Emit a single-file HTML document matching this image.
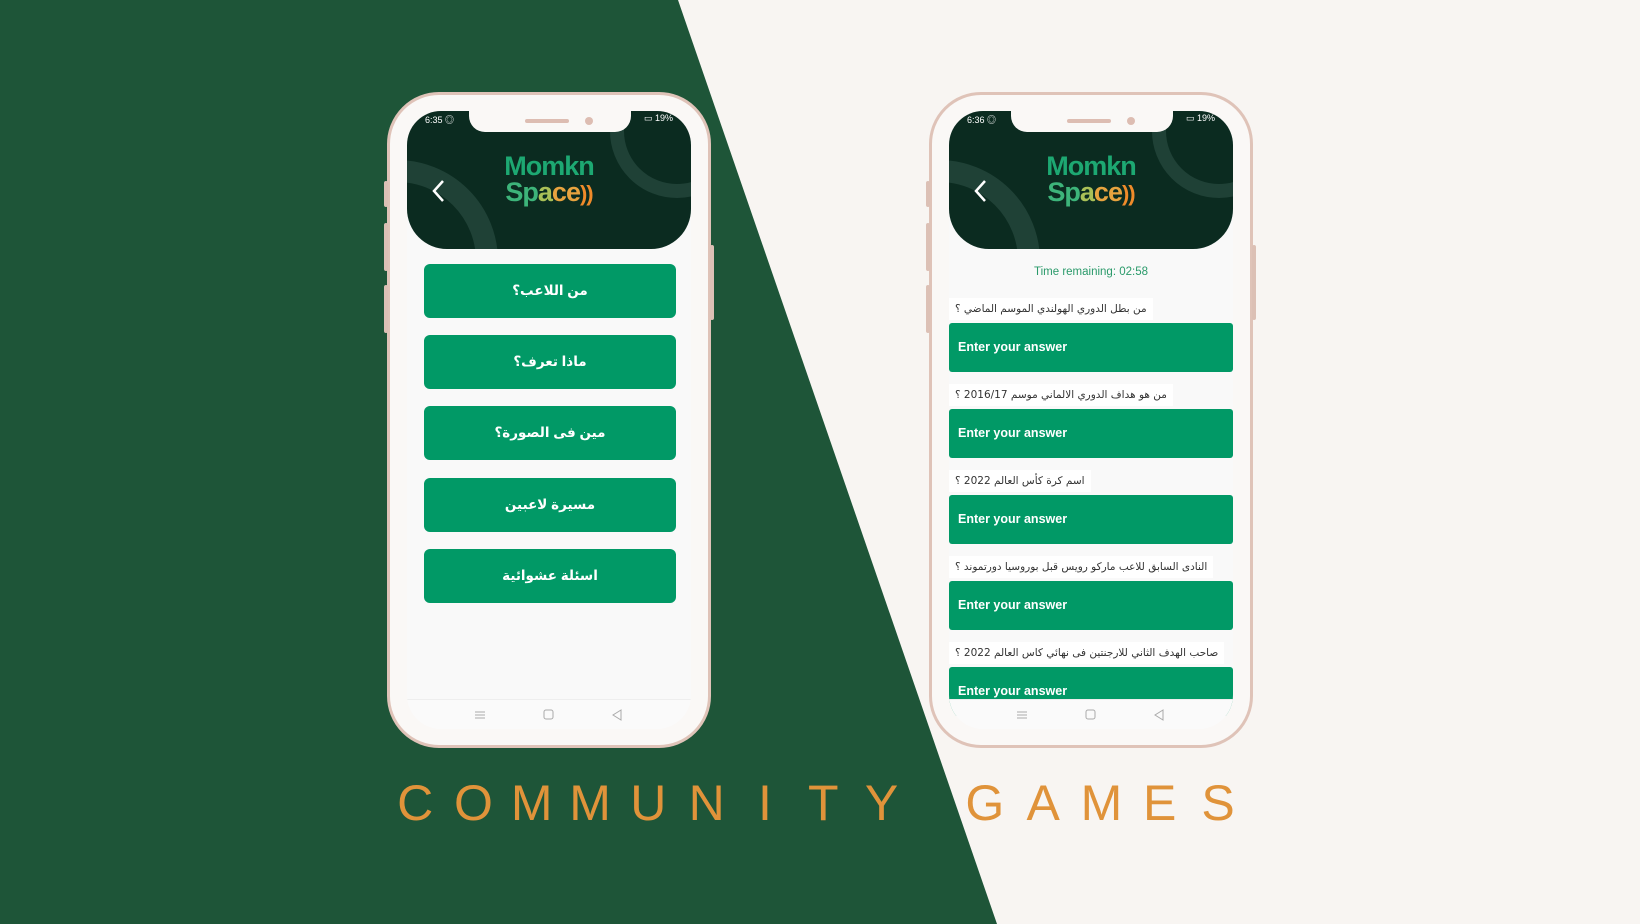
<!DOCTYPE html>
<html><head><meta charset="utf-8"><style>
*{margin:0;padding:0;box-sizing:border-box}
body{width:1640px;height:924px;overflow:hidden;background:#f8f5f2;position:relative;font-family:"Liberation Sans","Noto Sans CJK SC",sans-serif}
.bg{position:absolute;inset:0}
.phone{position:absolute;top:92px;width:324px;height:656px;border:3px solid #dfc3b8;border-radius:52px;background:#faf8f6}
.btnside{position:absolute;left:-6px;width:4px;background:#dcc0b5;border-radius:2px}
.btnr{position:absolute;right:-6px;width:4px;background:#dcc0b5;border-radius:2px}
.screen{position:absolute;left:17px;top:16px;width:284px;height:618px;border-radius:34px;background:#f9f9f9;overflow:hidden}
.head{position:absolute;left:0;top:0;width:284px;height:138px;background:#0b2b20;border-radius:0 0 40px 40px;overflow:hidden}
.notch{position:absolute;left:62px;top:0;width:162px;height:21px;background:#faf8f6;border-radius:0 0 16px 16px}
.spk{position:absolute;left:56px;top:8px;width:44px;height:4px;border-radius:2px;background:#ddbdb2}
.cam{position:absolute;left:116px;top:6px;width:8px;height:8px;border-radius:50%;background:#ddbdb2}
.st{position:absolute;top:2px;color:#fff;font-size:9px}
.logo{position:absolute;left:0;width:284px;text-align:center;font-weight:bold;font-size:27px;letter-spacing:-1px}
.back{position:absolute;left:24px;top:68px}
.b{position:absolute;left:17px;width:252px;height:54px;background:#019966;border-radius:6px;color:#fff;font-weight:bold;font-size:13.5px;text-align:center;line-height:54px;font-family:"Liberation Sans","Noto Sans CJK SC","DejaVu Sans",sans-serif}
.nav{position:absolute;left:0;top:588px;width:284px;height:30px;background:#fafafa;border-top:1px solid #eee}
.q{position:absolute;left:0;height:22px;background:#fff;font-size:10.5px;color:#333;line-height:22px;padding:0 6px;direction:rtl;font-family:"DejaVu Sans",sans-serif}
.a{position:absolute;left:0;width:284px;height:49px;background:#019966;border-radius:3px;color:#fff;font-weight:bold;font-size:12.5px;line-height:49px;padding-left:9px}
.title{position:absolute;top:774px;left:386px;color:#e0933a;font-size:50px;white-space:nowrap}
.title span{display:inline-block;width:58.3px;text-align:center}
</style></head><body>
<svg class="bg" width="1640" height="924"><polygon points="0,0 678,0 997,924 0,924" fill="#1e5538"/></svg>

<div class="phone" style="left:387px">
<div class="btnside" style="top:86px;height:26px"></div>
<div class="btnside" style="top:128px;height:48px"></div>
<div class="btnside" style="top:190px;height:48px"></div>
<div class="btnr" style="top:150px;height:75px"></div>
<div class="screen">
 <div class="head">
  <svg width="284" height="138" style="position:absolute;left:0;top:0"><circle cx="-10" cy="150" r="90" fill="none" stroke="#1f4136" stroke-width="22"/><circle cx="270" cy="20" r="60" fill="none" stroke="#1f4136" stroke-width="14"/></svg>
  <div class="st" style="left:18px">6:35 ◎</div>
  <div class="st" style="right:18px">▭ 19%</div>
  <svg class="back" width="16" height="24"><path d="M12 2 L3 12 L12 22" fill="none" stroke="#fff" stroke-width="2.5"/></svg>
  <div class="logo" style="top:40px;color:#1da872">Momkn</div>
  <div class="logo" style="top:66px"><span style="color:#3db47a">Sp</span><span style="color:#a9c057">a</span><span style="color:#e7a33f">ce</span><span style="color:#ef8b2a;font-size:22px">))</span></div>
 </div>
 <div class="notch"><div class="spk"></div><div class="cam"></div></div>
 <div class="b" style="top:153px">من اللاعب؟</div>
 <div class="b" style="top:224px">ماذا تعرف؟</div>
 <div class="b" style="top:295px">مين فى الصورة؟</div>
 <div class="b" style="top:367px">مسيرة لاعبين</div>
 <div class="b" style="top:438px">اسئلة عشوائية</div>
 <div class="nav"><svg width="284" height="30"><g stroke="#aaa" fill="none" stroke-width="1"><path d="M68 12h10M68 15h10M68 18h10"/><rect x="137" y="10" width="9" height="9" rx="2"/><path d="M214 10 L206 15 L214 20Z"/></g></svg></div>
</div></div>

<div class="phone" style="left:929px">
<div class="btnside" style="top:86px;height:26px"></div>
<div class="btnside" style="top:128px;height:48px"></div>
<div class="btnside" style="top:190px;height:48px"></div>
<div class="btnr" style="top:150px;height:75px"></div>
<div class="screen">
 <div class="head">
  <svg width="284" height="138" style="position:absolute;left:0;top:0"><circle cx="-10" cy="150" r="90" fill="none" stroke="#1f4136" stroke-width="22"/><circle cx="270" cy="20" r="60" fill="none" stroke="#1f4136" stroke-width="14"/></svg>
  <div class="st" style="left:18px">6:36 ◎</div>
  <div class="st" style="right:18px">▭ 19%</div>
  <svg class="back" width="16" height="24"><path d="M12 2 L3 12 L12 22" fill="none" stroke="#fff" stroke-width="2.5"/></svg>
  <div class="logo" style="top:40px;color:#1da872">Momkn</div>
  <div class="logo" style="top:66px"><span style="color:#3db47a">Sp</span><span style="color:#a9c057">a</span><span style="color:#e7a33f">ce</span><span style="color:#ef8b2a;font-size:22px">))</span></div>
 </div>
 <div class="notch"><div class="spk"></div><div class="cam"></div></div>
 <div style="position:absolute;top:155px;width:284px;text-align:center;font-size:11.5px;color:#2a9a6a">Time remaining: 02:58</div>
 <div class="q" style="top:187px">من بطل الدوري الهولندي الموسم الماضي ؟</div>
 <div class="a" style="top:212px">Enter your answer</div>
 <div class="q" style="top:273px">من هو هداف الدوري الالماني موسم 2016/17 ؟</div>
 <div class="a" style="top:298px">Enter your answer</div>
 <div class="q" style="top:359px">اسم كرة كأس العالم 2022 ؟</div>
 <div class="a" style="top:384px">Enter your answer</div>
 <div class="q" style="top:445px">النادى السابق للاعب ماركو رويس قبل بوروسيا دورتموند ؟</div>
 <div class="a" style="top:470px">Enter your answer</div>
 <div class="q" style="top:531px">صاحب الهدف الثاني للارجنتين فى نهائي كاس العالم 2022 ؟</div>
 <div class="a" style="top:556px">Enter your answer</div>
 <div class="nav"><svg width="284" height="30"><g stroke="#aaa" fill="none" stroke-width="1"><path d="M68 12h10M68 15h10M68 18h10"/><rect x="137" y="10" width="9" height="9" rx="2"/><path d="M214 10 L206 15 L214 20Z"/></g></svg></div>
</div></div>

<div class="title"><span>C</span><span>O</span><span>M</span><span>M</span><span>U</span><span>N</span><span>I</span><span>T</span><span>Y</span><span style="width:45px"></span><span>G</span><span>A</span><span>M</span><span>E</span><span>S</span></div>
</body></html>
